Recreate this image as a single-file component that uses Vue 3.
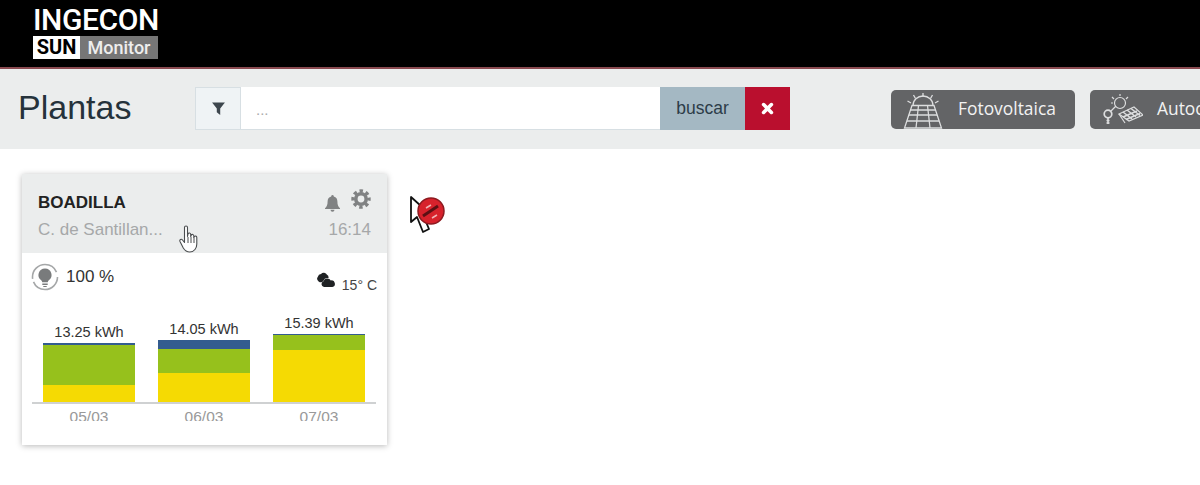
<template>
  <div class="page">
    <header class="topbar">
      <div class="logo">
        <div class="logo-name">INGECON</div>
        <div class="logo-sub">
          <span class="logo-sun">SUN</span>
          <span class="logo-monitor">Monitor</span>
        </div>
      </div>
    </header>

    <div class="toolbar">
      <h1 class="title">Plantas</h1>
      <div class="search">
        <span class="search-filter">
          <svg width="15" height="15" viewBox="0 0 14 14"><path d="M1 1.500h12L8.600 7v6L5.400 10.600V7z" fill="#3d464d" /></svg>
        </span>
        <div class="search-input">...</div>
        <button class="search-btn">buscar</button>
        <button class="search-clear">
          <svg width="13" height="13" viewBox="0 0 13 13"><path d="M2.600 2.600l7.800 7.800M10.400 2.600l-7.800 7.800" stroke="#fff" stroke-width="3.600" stroke-linecap="round" /></svg>
        </button>
      </div>
      <div class="types">
        <button class="type-btn">
          <svg class="type-icon" width="40" height="37" viewBox="0 0 40 37" fill="none" stroke="#dcddde" stroke-width="1.300">
            <path d="M10 13.500a10 9.500 0 0 1 20 0" />
            <path d="M20 1v4M10.500 3l2 3.500M29.500 3l-2 3.500M4.500 9l3.500 2M35.500 9l-3.500 2" />
            <path d="M9 13.500h22l7.500 22.500h-37z" />
            <path d="M7.500 18h25M5.800 23h28.400M3.800 29h32.400M15.500 13.500l-2.500 22.500M24.500 13.500l2.500 22.500" />
          </svg>
          <span class="type-label">Fotovoltaica</span>
        </button>
        <button class="type-btn">
          <svg class="type-icon" width="40" height="32" viewBox="0 0 40 32" fill="none" stroke="#dcddde" stroke-width="1.200">
            <circle cx="17" cy="9" r="5.500" />
            <path d="M17 0v2M9 3l2 2M25 3l-2 2M8 9h2" />
            <path d="M16 20l15-7 9 8-14 6z" />
            <path d="M20 18l9 7M24 16l9 7M28 14.500l9 7M20 23l14-6M23 25.500l14-6" stroke-width="1.500" />
            <path d="M16 20l6 9" />
            <circle cx="5" cy="20" r="3.800" stroke-width="1.700" />
            <path d="M5 24v6M3.500 26.500h3M3.500 29h3" stroke-width="1.700" />
            <path d="M8 17l5-5" />
          </svg>
          <span class="type-label">Autoconsumo</span>
        </button>
      </div>
    </div>

    <main class="content">
      <article class="card">
        <div class="card-head">
          <div class="head-left">
            <div class="plant-name">BOADILLA</div>
            <div class="plant-addr">C. de Santillan...</div>
          </div>
          <div class="head-right">
            <div class="head-icons">
              <svg class="bell" width="17" height="18" viewBox="0 0 17 18"><path d="M8.500 1a1.300 1.300 0 0 1 1.300 1.500C12.300 3 13.400 5 13.400 7.500c0 3.500.8 5 2.600 6.800v.7H1v-.7c1.800-1.800 2.600-3.300 2.600-6.800C3.600 5 4.700 3 7.200 2.500A1.300 1.300 0 0 1 8.500 1zM6.500 15.800h4a2 2 0 0 1-4 0z" fill="#808283" /></svg>
              <svg width="20" height="20" viewBox="0 0 20 20" fill="none" stroke="#808283">
                <circle cx="10" cy="10" r="5.200" stroke-width="3.600" />
                <circle cx="10" cy="10" r="8" stroke-width="3.400" stroke-dasharray="3.400 2.880" stroke-dashoffset="1.700" />
              </svg>
            </div>
            <div class="plant-time">16:14</div>
          </div>
        </div>

        <div class="card-status">
          <div class="status-power">
            <svg width="28" height="28" viewBox="0 0 28 28" fill="none">
              <circle cx="14" cy="14" r="12.500" stroke="#a5a7a8" stroke-width="1.600" stroke-dasharray="34 3 36 5" />
              <path d="M14 5.500a6.500 6.500 0 0 0-3.800 11.800c.7.600 1 1.200 1 2h5.600c0-.8.300-1.400 1-2A6.500 6.500 0 0 0 14 5.500z" fill="#797b7c" />
              <path d="M11.300 20.500h5.400v1.500h-5.400zM12.300 23h3.400v1h-3.400z" fill="#797b7c" />
            </svg>
            <span>100 %</span>
          </div>
          <div class="status-weather">
            <svg width="20" height="17" viewBox="0 0 20 17"><path d="M2 5.500a3 3 0 0 1 3-2.500 3.500 3.500 0 0 1 6 .8 3 3 0 0 1 1.500 3.200H11a4 4 0 0 0-3.500 2.800A3 3 0 0 1 2 5.500z" fill="#1f2224" /><path d="M8 16a3 3 0 0 1-.5-5.800 4 4 0 0 1 7.300-.7 3.300 3.300 0 0 1 1.500 6.500z" fill="#1f2224" /></svg>
            <span>15° C</span>
          </div>
        </div>

        <div class="chart">
          <div v-for="day in days" :key="day.date" class="chart-col">
            <span class="bar-value">{{ day.total }} kWh</span>
            <div class="bar">
              <div class="seg seg-blue" :style="{ height: day.blue + 'px' }"></div>
              <div class="seg seg-green" :style="{ height: day.green + 'px' }"></div>
              <div class="seg seg-yellow" :style="{ height: day.yellow + 'px' }"></div>
            </div>
          </div>
        </div>
        <div class="chart-dates">
          <span v-for="day in days" :key="day.date" class="chart-date">{{ day.date }}</span>
        </div>
      </article>

      <!-- cursors captured in the recording -->
      <svg class="cursor-hand" width="22" height="30" viewBox="0 0 22 30">
        <path d="M5.500 2.500c0-2 3-2 3 0v9l.5-2.500c.5-1.500 2.700-1.200 2.700.5v2l.5-1.300c.6-1.300 2.600-1 2.600.7v1.500l.5-.8c.8-1 2.500-.6 2.500 1v6.400c0 4-2.500 8-7 8-3.500 0-5-1.500-6.500-4l-3.300-6.500c-.8-1.800 1.300-3 2.500-1.500l2 2.500z" fill="#fff" stroke="#4a4d4f" stroke-width="1.100" stroke-linejoin="round" />
        <path d="M9 12v6M12 12v6M15 12.500V18" stroke="#4a4d4f" stroke-width="1" fill="none" />
      </svg>
      <svg class="cursor-block" width="38" height="40" viewBox="0 0 38 40">
        <path d="M2 2v25l6-5 6 15 6-3-6-14h8z" fill="#fff" stroke="#111" stroke-width="1.800" stroke-linejoin="round" />
        <circle cx="22" cy="16" r="13" fill="#d7222c" stroke="#8d1a20" stroke-width="1.500" />
        <path d="M14 21l15-10" stroke="#5c1014" stroke-width="3" />
        <path d="M17 13l5-3M23 23l5-3" stroke="#f0b4b6" stroke-width="1.500" />
      </svg>
    </main>
  </div>
</template>

<script setup>
const days = [
  { date: '05/03', total: '13.25', blue: 2, green: 40, yellow: 17 },
  { date: '06/03', total: '14.05', blue: 9, green: 24, yellow: 29 },
  { date: '07/03', total: '15.39', blue: 1, green: 15, yellow: 52 },
]
</script>

<style>
html, body { overflow: hidden; background: #fff; }
</style>

<style scoped>
.page {
  width: 1200px; height: 485px; overflow: hidden;
  font-family: 'Liberation Sans', Arial, sans-serif;
  background: #fff; color: #333;
}

/* Top bar */
.topbar {
  height: 69px; box-sizing: border-box; background: #000;
  border-bottom: 2px solid #8a4a50;
  padding: 8px 0 0 33px;
}
.logo { width: 125px; }
.logo-name {
  font-family: Roboto, sans-serif; font-weight: 500;
  font-size: 30px; line-height: 24px; color: #fff;
  letter-spacing: -0.4px; white-space: nowrap;
}
.logo-sub { display: flex; height: 23px; margin-top: 4px; font-family: Roboto, sans-serif; }
.logo-sun {
  width: 47px; background: #fff; color: #000;
  font-size: 20px; font-weight: 700; line-height: 23px; text-align: center;
}
.logo-monitor {
  flex: 1; background: #767676; color: #eee;
  font-size: 18px; font-weight: 500; line-height: 23px; text-align: center;
}

/* Toolbar */
.toolbar {
  height: 80px; background: #ebeded;
  display: flex; align-items: center;
  padding-left: 18px; overflow: hidden;
}
.title {
  margin: 0 0 3px; width: 177px; flex-shrink: 0;
  font-size: 34px; font-weight: 400; color: #25323b;
}
.search {
  display: flex; width: 595px; height: 43px; flex-shrink: 0;
  margin-bottom: 1px; font-size: 16px;
}
.search-filter {
  width: 46px; box-sizing: border-box;
  background: #eff3f5; border: 1px solid #d7dfe3;
  display: flex; align-items: center; justify-content: center;
}
.search-input {
  flex: 1; background: #fff;
  border-bottom: 1px solid #d7dfe3;
  padding: 14px 0 0 15px; box-sizing: border-box;
  color: #aaa; font-size: 15px;
}
.search-btn {
  width: 85px; border: none; padding: 0;
  background: #a4b8c3; color: #2c3c48;
  font-family: inherit; font-size: 17.500px;
}
.search-clear {
  width: 45px; border: none; padding: 0;
  background: #ba0f2e;
  display: flex; align-items: center; justify-content: center;
}
.types { display: flex; gap: 15px; margin-left: 101px; flex-shrink: 0; }
.type-btn {
  position: relative;
  width: 184px; height: 39px; padding: 0 0 3px 67px;
  border: none; border-radius: 5px;
  background: #636466; color: #f2f2f2;
  font-family: 'Open Sans', sans-serif; font-size: 17.400px; text-align: left;
  white-space: nowrap; overflow: hidden;
}
.type-icon { position: absolute; left: 12px; top: 2px; }
.type-btn + .type-btn .type-icon { left: 13px; top: 4px; }

/* Card */
.content { position: relative; padding: 25px 0 0 22px; }
.card {
  width: 365px; height: 271px; box-sizing: border-box;
  background: #fff;
  box-shadow: 0 1px 6px rgba(0, 0, 0, 0.28);
}
.card-head {
  height: 79px; box-sizing: border-box; background: #ebeded;
  display: flex; justify-content: space-between;
  padding: 19px 16px 0 16px;
}
.plant-name { font-size: 17px; font-weight: 700; color: #222; line-height: 20px; }
.plant-addr { font-size: 17px; color: #a6a8a9; margin-top: 7px; line-height: 20px; }
.head-right { display: flex; flex-direction: column; align-items: flex-end; }
.head-icons { display: flex; align-items: flex-start; gap: 10px; margin-top: -4px; height: 24px; }
.bell { margin-top: 5px; }
.plant-time { font-size: 17px; color: #a6a8a9; margin-top: 7px; line-height: 20px; }

.card-status {
  display: flex; justify-content: space-between;
  padding: 10px 10px 0 9px; height: 43px;
}
.status-power { display: flex; align-items: flex-start; gap: 7px; font-size: 17px; color: #333; }
.status-power span { line-height: 28px; }
.status-weather {
  display: flex; align-items: flex-start; gap: 6px;
  font-size: 14px; color: #444; margin-top: 8px;
}
.status-weather span { margin-top: 6px; }

.chart {
  height: 96px; margin: 0 11px 0 10px;
  display: flex; align-items: flex-end; gap: 23px;
  padding: 0 11px;
  border-bottom: 2px solid #cfd1d2;
}
.chart-col { width: 92px; display: flex; flex-direction: column; align-items: center; }
.bar-value { font-size: 14.500px; color: #333; line-height: 17px; margin-bottom: 2px; white-space: nowrap; }
.bar { width: 92px; }
.seg-blue { background: #335c8f; }
.seg-green { background: #96c11c; }
.seg-yellow { background: #f5da03; }

.chart-dates {
  display: flex; gap: 23px; padding: 0 22px 0 21px;
  height: 17px; overflow: hidden;
}
.chart-date {
  width: 92px; text-align: center;
  font-size: 15.500px; color: #999; line-height: 26px;
}

.cursor-hand { position: absolute; left: 179px; top: 76px; }
.cursor-block { position: absolute; left: 409px; top: 46px; }
</style>
